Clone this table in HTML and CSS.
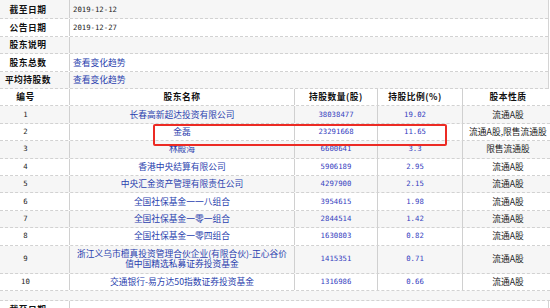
FILE: index.html
```html
<!DOCTYPE html>
<html lang="zh-CN">
<head>
  <meta charset="UTF-8">
  <meta name="viewport" content="width=device-width, initial-scale=1.0">
  <title>十大股东</title>
  <link rel="stylesheet" href="styles.css">
</head>
<body>
  <div class="page">
    <div class="info">
      <div class="info-row first"><div class="label">截至日期</div><div class="value num">2019-12-12</div></div>
      <div class="info-row"><div class="label">公告日期</div><div class="value num">2019-12-27</div></div>
      <div class="info-row"><div class="label">股东说明</div><div class="value"></div></div>
      <div class="info-row"><div class="label">股东总数</div><div class="value"><a href="#">查看变化趋势</a></div></div>
      <div class="info-row"><div class="label">平均持股数</div><div class="value"><a href="#">查看变化趋势</a></div></div>
    </div>

    <div class="holders">
      <div class="h-row head">
        <div class="c-no">编号</div>
        <div class="c-name">股东名称</div>
        <div class="c-qty">持股数量(股)</div>
        <div class="c-pct">持股比例(%)</div>
        <div class="c-type">股本性质</div>
      </div>
      <div class="h-row">
        <div class="c-no num">1</div><div class="c-name">长春高新超达投资有限公司</div>
        <div class="c-qty num">38038477</div><div class="c-pct num">19.02</div><div class="c-type">流通A股</div>
      </div>
      <div class="h-row">
        <div class="c-no num">2</div><div class="c-name">金磊</div>
        <div class="c-qty num">23291668</div><div class="c-pct num">11.65</div><div class="c-type">流通A股,限售流通股</div>
      </div>
      <div class="h-row">
        <div class="c-no num">3</div><div class="c-name">林殿海</div>
        <div class="c-qty num">6600641</div><div class="c-pct num">3.3</div><div class="c-type">限售流通股</div>
      </div>
      <div class="h-row">
        <div class="c-no num">4</div><div class="c-name">香港中央结算有限公司</div>
        <div class="c-qty num">5906189</div><div class="c-pct num">2.95</div><div class="c-type">流通A股</div>
      </div>
      <div class="h-row">
        <div class="c-no num">5</div><div class="c-name">中央汇金资产管理有限责任公司</div>
        <div class="c-qty num">4297900</div><div class="c-pct num">2.15</div><div class="c-type">流通A股</div>
      </div>
      <div class="h-row">
        <div class="c-no num">6</div><div class="c-name">全国社保基金一一八组合</div>
        <div class="c-qty num">3954615</div><div class="c-pct num">1.98</div><div class="c-type">流通A股</div>
      </div>
      <div class="h-row">
        <div class="c-no num">7</div><div class="c-name">全国社保基金一零一组合</div>
        <div class="c-qty num">2844514</div><div class="c-pct num">1.42</div><div class="c-type">流通A股</div>
      </div>
      <div class="h-row">
        <div class="c-no num">8</div><div class="c-name">全国社保基金一零四组合</div>
        <div class="c-qty num">1630803</div><div class="c-pct num">0.82</div><div class="c-type">流通A股</div>
      </div>
      <div class="h-row tall">
        <div class="c-no num">9</div><div class="c-name">浙江义乌市檀真投资管理合伙企业(有限合伙)-正心谷价值中国精选私募证券投资基金</div>
        <div class="c-qty num">1415351</div><div class="c-pct num">0.71</div><div class="c-type">流通A股</div>
      </div>
      <div class="h-row">
        <div class="c-no num">10</div><div class="c-name">交通银行-易方达50指数证券投资基金</div>
        <div class="c-qty num">1316986</div><div class="c-pct num">0.66</div><div class="c-type">流通A股</div>
      </div>
    </div>

    <div class="spacer"></div>

    <div class="info next">
      <div class="info-row"><div class="label">截至日期</div><div class="value"></div></div>
    </div>

    <!-- highlight around row 2 -->
    <div class="mark"></div>
  </div>
</body>
</html>
```

FILE: styles.css
```css
* { margin: 0; padding: 0; box-sizing: border-box; }
body {
  background: #fff;
  color: #222;
  font-family: "Noto Sans CJK SC", "Noto Sans", sans-serif;
  font-size: 8.75px;
  overflow: hidden;
}
a { color: #2a3fae; text-decoration: none; }
.page {
  position: relative;
  width: 550px;
}
.num {
  font-family: "DejaVu Sans Mono", monospace;
  font-size: 7.3px;
}

/* Info block */
.info { width: 549px; border-right: 1px solid #d4d4d4; }
.info-row {
  display: grid;
  grid-template-columns: 70px 1fr;
  height: 17.5px;
  border-bottom: 1px dashed #d2d2d2;
}
.info-row.first { height: 19px; }
.info-row:nth-child(odd) { background: #f6f6f6; }
.info.next .info-row { background: #fff; }
.info-row .label {
  display: flex;
  align-items: center;
  justify-content: center;
  padding-right: 13px;
  font-weight: bold;
  letter-spacing: 0.5px;
  color: #111;
  border-right: 1px solid #d0d0d0;
}
.info-row .value {
  display: flex;
  align-items: center;
  padding-left: 3px;
  color: #222;
}

/* Holders table */
.h-row {
  display: grid;
  grid-template-columns: 70px 225px 83px 85px 87px;
  height: 17.4px;
  border-bottom: 1px dashed #d2d2d2;
}
.h-row:nth-child(even) { background: #f6f6f6; }
.h-row.tall { height: 28px; }
.h-row > div {
  display: flex;
  align-items: center;
  justify-content: center;
  text-align: center;
  line-height: 10px;
  border-right: 1px solid #d0d0d0;
  white-space: nowrap;
}
.h-row > .c-type { border-right: none; }
.h-row .c-no { padding-right: 18px; color: #222; }
.h-row .c-name { color: #2a3fae; padding: 0 6px; white-space: normal; }
.h-row .c-qty, .h-row .c-pct { color: #3440c0; }
.h-row .c-pct { padding-right: 10px; }
.h-row .c-type { color: #222; padding-left: 3px; }
.h-row.head > div {
  font-family: "Noto Sans CJK SC", "Noto Sans", sans-serif;
  font-size: 8.75px;
  font-weight: bold;
  letter-spacing: 0.5px;
  color: #111;
}

.spacer {
  height: 10px;
  background: #f6f6f6;
  border-bottom: 1px dashed #d2d2d2;
}

/* Red outline */
.mark {
  position: absolute;
  left: 153px;
  top: 124px;
  width: 294px;
  height: 22px;
  border: 2px solid #ec2b24;
  border-radius: 2px;
}
```
